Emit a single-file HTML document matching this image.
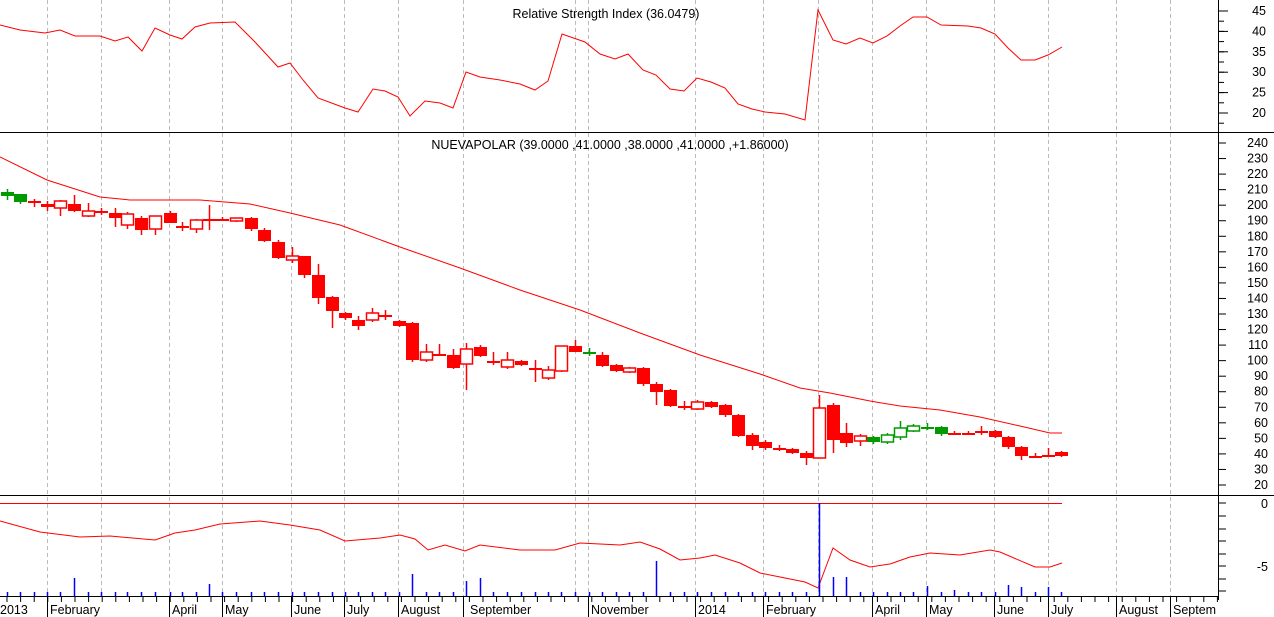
<!DOCTYPE html><html><head><meta charset="utf-8"><style>
html,body{margin:0;padding:0;background:#fff;width:1274px;height:617px;overflow:hidden}
svg{display:block;font-family:"Liberation Sans",sans-serif;font-size:12.5px}
</style></head><body>
<svg id="s" width="1274" height="617" xmlns="http://www.w3.org/2000/svg"></svg>
<script>
var s=document.getElementById('s'),h='';
function L(x1,y1,x2,y2,c,w,extra){h+='<line x1="'+x1+'" y1="'+y1+'" x2="'+x2+'" y2="'+y2+'" stroke="'+c+'" stroke-width="'+(w||1)+'" '+(extra||'')+'/>';}
function T(x,y,t,a){h+='<text x="'+x+'" y="'+y+'" text-anchor="'+(a||'start')+'" fill="#000">'+t+'</text>';}
function P(pts,c){h+='<polyline fill="none" stroke="'+c+'" stroke-width="1" points="'+pts.map(function(p){return p.join(',')}).join(' ')+'"/>';}
[47,101,169,222,291,344,398,463,575,588,695,763,818,872,926,994,1048,1116,1170].forEach(function(x){L(x+.5,0,x+.5,596,'#bbb',1,'stroke-dasharray="4,3"');});
L(0,132.5,1274,132.5,'#000');L(0,495.5,1274,495.5,'#000');
L(1218.5,0,1218.5,600,'#000');L(0,596.5,1219,596.5,'#000');
[45,40,35,30,25,20].forEach(function(v){var y=11+(45-v)*4.08;L(1218,y,1228,y,'#000');T(1266,y+4,v,'end');});
for(var k=0;k<=11;k++){var y=11+k*10.2;L(1218,y,1224,y,'#000');}
for(var v=20;v<=240;v+=10){var y=485-(v-20)*1.5545;L(1218,y,1226,y,'#000');T(1268,y+4,v,'end');}
T(1268,508,'0','end');T(1268,571,'-5','end');
[503,516,529,541,554,566,579,591].forEach(function(y){L(1218,y,1226,y,'#000');});
for(var x=7;x<1218;x+=13.6){L(x,596,x,602,'#000');}
[47,169,222,291,344,398,463,588,695,763,872,926,994,1048,1116,1170].forEach(function(x){L(x+.5,596,x+.5,617,'#000');});
[[0,'2013'],[50,'February'],[172,'April'],[225,'May'],[294,'June'],[347,'July'],[401,'August'],[470,'September'],[591,'November'],[698,'2014'],[766,'February'],[875,'April'],[929,'May'],[997,'June'],[1051,'July'],[1119,'August'],[1173,'Septem']].forEach(function(a){T(a[0],614,a[1]);});
T(606,18,'Relative Strength Index (36.0479)','middle');
T(610,149,'NUEVAPOLAR (39.0000 ,41.0000 ,38.0000 ,41.0000 ,+1.86000)','middle');
P([[0,25],[20,30],[45,33],[60,30],[75,36],[100,36],[115,41],[128,37],[142,51],[155,28],[170,35],[182,39],[195,27],[210,23],[235,22],[255,42],[278,67],[290,63],[303,80],[318,98],[345,108],[358,112],[373,89],[385,91],[398,97],[410,116],[425,101],[440,103],[453,108],[466,72],[480,77],[500,80],[520,84],[535,90],[548,81],[562,34],[585,42],[600,54],[615,59],[628,54],[643,70],[656,75],[670,89],[684,91],[697,78],[711,82],[725,88],[738,104],[752,109],[765,112],[785,114],[805,120],[818,10],[833,40],[846,44],[860,38],[873,43],[887,36],[900,26],[913,17],[927,17],[941,25],[968,26],[981,28],[995,34],[1008,48],[1021,60],[1035,60],[1048,55],[1062,47]],'#f00');
P([[0,157],[47,180],[100,197],[130,200],[200,200],[250,204],[290,213],[340,225],[400,247],[460,268],[520,290],[580,310],[640,333],[700,355],[760,374],[800,388],[830,393],[870,401],[900,406],[940,410],[980,417],[1020,426],[1050,433],[1062,433]],'#f00');
var C=[[7,192,196,189,200,'g'],[20,194,202,194,204,'g'],[34,201,203,199,207,'f'],[47,204,207,201,211,'f'],[60,201,208,200,216,'h'],[74,204,211,195,212,'f'],[88,211,216,203,217,'h'],[101,211,211,208,215,'f'],[115,213,218,208,227,'f'],[127,214,225,212,229,'h'],[141,218,230,216,235,'f'],[155,216,229,216,235,'h'],[170,213,223,211,223,'f'],[182,226,228,222,231,'f'],[196,220,229,219,233,'h'],[209,219,219,205,230,'f'],[222,219,219,217,221,'f'],[236,218,221,218,222,'h'],[251,218,229,217,231,'f'],[264,230,241,228,242,'f'],[278,242,258,240,259,'f'],[292,256,260,247,263,'h'],[304,256,275,256,278,'f'],[318,275,298,264,304,'f'],[332,297,311,296,328,'f'],[345,313,318,312,320,'f'],[358,320,326,316,330,'f'],[372,313,320,308,322,'h'],[385,315,315,310,320,'f'],[399,321,326,320,327,'f'],[412,323,360,322,362,'f'],[426,352,360,344,362,'h'],[439,354,354,344,356,'f'],[453,355,368,349,369,'f'],[466,349,364,343,390,'h'],[480,347,356,345,357,'f'],[493,361,361,352,365,'f'],[507,360,367,352,369,'h'],[521,361,365,360,366,'f'],[535,368,368,360,382,'f'],[548,370,378,366,380,'h'],[561,346,371,346,372,'h'],[575,346,352,340,352,'f'],[589,352,352,348,356,'g'],[602,355,366,352,367,'f'],[616,365,371,364,372,'f'],[629,368,372,367,373,'h'],[643,368,384,367,386,'f'],[656,384,392,382,405,'f'],[670,390,406,389,407,'f'],[684,406,406,401,410,'f'],[697,402,409,400,410,'h'],[711,402,407,401,408,'f'],[725,405,415,404,417,'f'],[738,415,436,414,437,'f'],[752,435,446,433,450,'f'],[765,442,448,440,450,'f'],[779,448,448,445,451,'f'],[792,449,453,448,454,'f'],[806,453,458,451,465,'f'],[819,408,458,395,458,'h'],[833,405,440,403,453,'f'],[846,433,443,423,447,'f'],[860,436,441,434,446,'h'],[873,437,442,436,444,'g'],[887,435,442,433,444,'gh'],[900,428,437,421,440,'gh'],[913,426,431,424,432,'gh'],[927,427,427,423,430,'g'],[941,427,434,426,436,'g'],[954,433,433,431,435,'f'],[968,433,433,431,435,'f'],[981,431,431,426,435,'f'],[995,431,437,430,438,'f'],[1008,437,447,436,449,'f'],[1021,447,456,446,460,'f'],[1035,456,456,453,458,'f'],[1048,455,455,448,457,'f'],[1061,452,456,451,457,'f']];
C.forEach(function(c){var col=c[5].charAt(0)=='g'?'#090':'#f00';var x=c[0];
L(x+.5,c[3],x+.5,c[4],col,1.5);
var ht=Math.max(c[2]-c[1],2);
if(c[5]=='h'||c[5]=='gh')h+='<rect x="'+(x-5.5)+'" y="'+c[1]+'" width="12" height="'+ht+'" fill="#fff" stroke="'+col+'" stroke-width="1.5"/>';
else h+='<rect x="'+(x-6)+'" y="'+c[1]+'" width="13" height="'+ht+'" fill="'+col+'"/>';});
L(0,503.5,1062,503.5,'#f00');
P([[0,521],[40,532],[80,537],[110,536],[155,540],[175,533],[195,530],[220,524],[260,521],[290,525],[320,530],[345,541],[380,538],[400,535],[415,539],[428,550],[445,545],[465,551],[480,545],[520,550],[555,550],[580,543],[620,545],[640,542],[660,549],[680,560],[700,558],[715,555],[740,563],[760,573],[780,577],[805,582],[818,588],[833,548],[850,560],[870,567],[890,564],[910,557],[930,553],[960,555],[990,550],[1000,552],[1035,567],[1050,567],[1062,563]],'#f00');
C.forEach(function(c){var top=592;var big={74:578,209:584,412:574,466:581,480:578,656:561,819:503,833:577,846:577,1008:585,1021:587,1048:587,927:586,954:590};if(big[c[0]])top=big[c[0]];L(c[0]+.5,top,c[0]+.5,596,'#00f',1.5);});
s.innerHTML=h;
</script></body></html>
